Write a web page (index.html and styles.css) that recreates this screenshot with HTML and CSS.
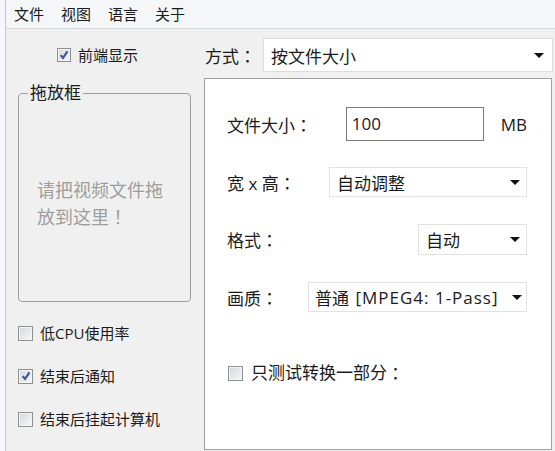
FILE: index.html
```html
<!DOCTYPE html>
<html lang="zh-CN">
<head>
  <meta charset="UTF-8">
  <meta name="viewport" content="width=device-width, initial-scale=1.0">
  <title>视频转换</title>
  <link rel="stylesheet" href="styles.css">
</head>
<body>
  <div class="window">
    <div class="menubar">
      <span class="menu-item">文件</span>
      <span class="menu-item">视图</span>
      <span class="menu-item">语言</span>
      <span class="menu-item">关于</span>
    </div>
    <div class="main">
      <div class="side">
        <label class="check top-check">
          <span class="box checked"><svg viewBox="0 0 9 9"><path d="M1.5 4.6 L3.6 7.2 L7.6 1.2" /></svg></span>
          前端显示
        </label>
        <fieldset class="dropbox">
          <legend>拖放框</legend>
          <p class="hint">请把视频文件拖<br>放到这里<span class="fw">！</span></p>
        </fieldset>
        <div class="options">
          <label class="check"><span class="box"></span>低CPU使用率</label>
          <label class="check"><span class="box checked"><svg viewBox="0 0 9 9"><path d="M1.5 4.6 L3.6 7.2 L7.6 1.2" /></svg></span>结束后通知</label>
          <label class="check"><span class="box"></span>结束后挂起计算机</label>
        </div>
      </div>
      <div class="content">
        <div class="mode-row">
          <span class="mode-label">方式<span class="fw">：</span></span>
          <div class="combo combo-main">按文件大小<span class="arrow"></span></div>
        </div>
        <div class="panel">
          <div class="row row-size">
            <span class="label">文件大小<span class="fw">：</span></span>
            <div class="field">100</div>
            <span class="unit">MB</span>
          </div>
          <div class="row row-dim">
            <span class="label">宽 x 高<span class="fw">：</span></span>
            <div class="combo combo-dim">自动调整<span class="arrow"></span></div>
          </div>
          <div class="row row-format">
            <span class="label">格式<span class="fw">：</span></span>
            <div class="combo combo-format">自动<span class="arrow"></span></div>
          </div>
          <div class="row row-quality">
            <span class="label">画质<span class="fw">：</span></span>
            <div class="combo combo-quality">普通 <span class="codec">[MPEG4: 1-Pass]</span><span class="arrow"></span></div>
          </div>
          <label class="check test-check"><span class="box"></span>只测试转换一部分<span class="fw">：</span></label>
        </div>
      </div>
    </div>
  </div>
</body>
</html>
```

FILE: styles.css
```css
body {
  margin: 0;
  background-color: #f4f7fb;
  color: #1a1a1a;
  font-family: "Open Sans", "Noto Sans CJK SC", sans-serif;
}

/* full-width punctuation, centred in its own cell */
.fw {
  display: inline-block;
  width: 1em;
  text-align: center;
  font-family: "Noto Sans CJK JP", sans-serif;
  font-feature-settings: "locl" 0;
}

.window {
  margin-left: 5px;
  height: 451px;
  border-left: 1px solid #b4cbe6;
  background-color: #f0f0f0;
  overflow: hidden;
}

/* menu bar */
.menubar {
  display: flex;
  gap: 17px;
  height: 28px;
  padding-left: 8px;
  align-items: center;
  background-color: #f5f6f7;
  border-bottom: 1px solid #d6d7d9;
  font-size: 15px;
  line-height: 20px;
}

.main {
  display: flex;
}

/* left column */
.side {
  width: 198px;
  flex-shrink: 0;
}

.check {
  display: flex;
  align-items: center;
  height: 20px;
  line-height: 20px;
  font-size: 15px;
}

.box {
  display: inline-flex;
  align-items: center;
  justify-content: center;
  box-sizing: border-box;
  width: 14px;
  height: 14px;
  margin-right: 7px;
  border: 1px solid #8e8f8f;
  background: linear-gradient(135deg, #d4d7dc, #f8f8f8);
  box-shadow: inset 0 0 0 1px #f4f4f4;
}

.box svg {
  width: 10px;
  height: 10px;
}

.box path {
  fill: none;
  stroke: #3d55a0;
  stroke-width: 2;
}

.top-check {
  margin: 16px 0 0 51px;
}

.dropbox {
  box-sizing: border-box;
  width: 173px;
  height: 219px;
  margin: 18px 0 0 12px;
  padding: 0 0 0 9px;
  border: 1px solid #a0a0a0;
  border-radius: 4px;
}

.dropbox legend {
  padding: 0 2px;
  font-size: 17px;
  line-height: 20px;
}

.hint {
  margin: 74px 0 0 0;
  padding-left: 9px;
  color: #9d9d9d;
  font-size: 18px;
  line-height: 26px;
}

.options {
  display: flex;
  flex-direction: column;
  gap: 23px;
  margin: 21px 0 0 12px;
}

.options .box {
  width: 15px;
  height: 15px;
}

/* right column */
.content {
  flex: 1;
  padding-top: 9px;
}

.mode-row {
  display: flex;
  align-items: center;
  height: 34px;
}

.mode-label {
  width: 58px;
  padding-left: 1px;
  font-size: 17px;
}

.combo {
  display: flex;
  align-items: center;
  box-sizing: border-box;
  height: 30px;
  padding-left: 7px;
  background-color: #fff;
  border: 1px solid #e2e2e2;
  font-size: 17px;
  white-space: pre;
}

.arrow {
  margin-left: auto;
  margin-right: 6px;
  width: 0;
  height: 0;
  border-left: 5px solid transparent;
  border-right: 5px solid transparent;
  border-top: 5px solid #111;
}

.combo-main {
  flex: 1;
  height: 34px;
  margin-right: 2px;
  border-color: #dcdcdc;
}

.combo-main .arrow {
  margin-right: 8px;
}

.panel {
  box-sizing: border-box;
  height: 372px;
  margin: 6px 3px 0 0;
  padding: 28px 24px 0 22px;
  background-color: #fff;
  border: 1px solid #a0a0a0;
}

.row {
  display: flex;
  align-items: center;
  justify-content: space-between;
  height: 30px;
  font-size: 17px;
}

.row-size {
  height: 34px;
}

.field {
  box-sizing: border-box;
  width: 138px;
  height: 34px;
  margin-left: auto;
  padding-left: 5px;
  border: 1px solid #7a7a7a;
  line-height: 32px;
}

.unit {
  margin-left: 17px;
}

.row-dim {
  margin-top: 26px;
}

.combo-dim {
  width: 198px;
}

.row-format {
  height: 31px;
  margin-top: 27px;
}

.combo-format {
  width: 109px;
  height: 31px;
}

.row-quality {
  margin-top: 27px;
}

.combo-quality {
  width: 219px;
  padding-left: 6px;
}

.combo-quality .codec {
  margin-left: 2px;
  letter-spacing: 1px;
}

.combo-quality .arrow {
  margin-right: 4px;
}

.test-check {
  margin: 51px 0 0 1px;
  font-size: 17px;
}

.test-check .box {
  width: 15px;
  height: 15px;
  margin-right: 8px;
}
```
